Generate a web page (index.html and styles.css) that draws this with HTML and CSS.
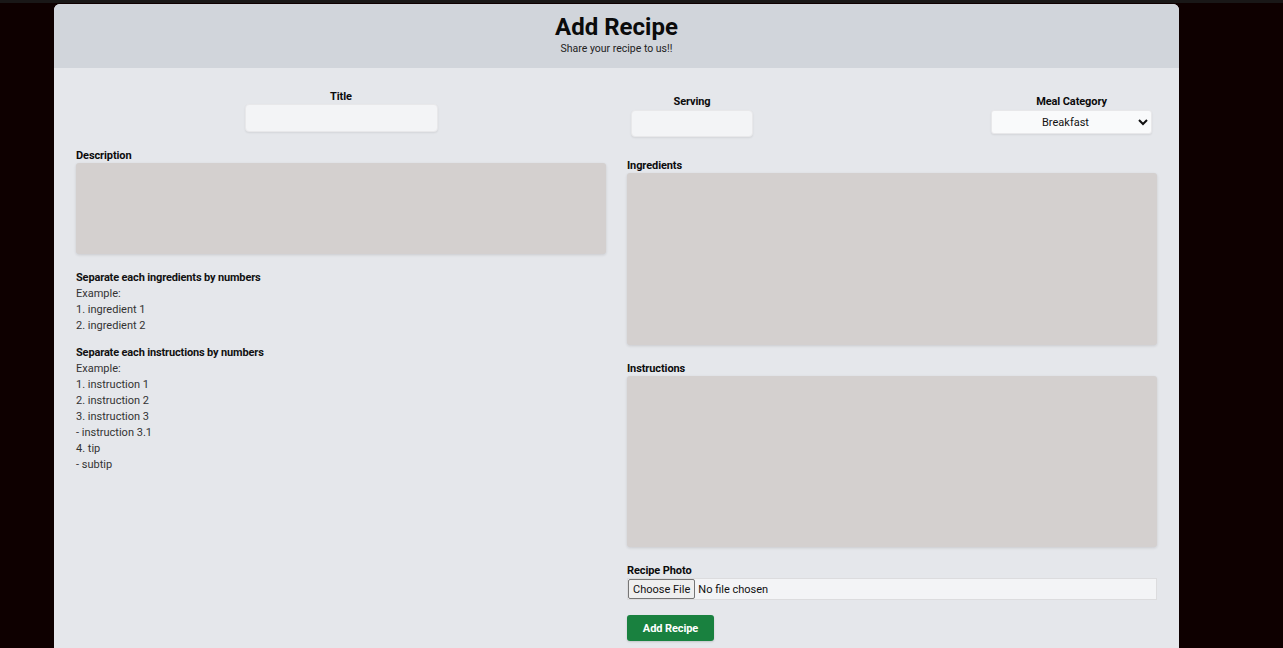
FILE: index.html
```html
<!DOCTYPE html>
<html lang="en">
<head>
<meta charset="utf-8">
<title>Add Recipe</title>
<link rel="stylesheet" href="styles.css">
</head>
<body>
<div class="card">
  <header class="card-header">
    <h1 class="page-title">Add Recipe</h1>
    <p class="page-subtitle">Share your recipe to us!!</p>
  </header>
  <form class="recipe-form">
    <div class="col col-left">
      <div class="field field-center field-title">
        <label class="label">Title</label>
        <input class="text-input title-input" type="text">
      </div>
      <div class="field field-desc">
        <label class="label">Description</label>
        <textarea class="area area-desc"></textarea>
      </div>
      <div class="hints">
        <div class="hint-block">
          <p class="hint-title">Separate each ingredients by numbers</p>
          <p class="hint-line">Example:</p>
          <p class="hint-line">1. ingredient 1</p>
          <p class="hint-line">2. ingredient 2</p>
        </div>
        <div class="hint-block">
          <p class="hint-title">Separate each instructions by numbers</p>
          <p class="hint-line">Example:</p>
          <p class="hint-line">1. instruction 1</p>
          <p class="hint-line">2. instruction 2</p>
          <p class="hint-line">3. instruction 3</p>
          <p class="hint-line">- instruction 3.1</p>
          <p class="hint-line">4. tip</p>
          <p class="hint-line">- subtip</p>
        </div>
      </div>
    </div>
    <div class="col col-right">
      <div class="top-row">
        <div class="field field-center">
          <label class="label">Serving</label>
          <input class="text-input serving-input" type="text">
        </div>
        <div class="field field-center">
          <label class="label">Meal Category</label>
          <select class="select">
            <option>Breakfast</option>
            <option>Lunch</option>
            <option>Dinner</option>
          </select>
        </div>
      </div>
      <div class="field field-ingr">
        <label class="label">Ingredients</label>
        <textarea class="area area-big"></textarea>
      </div>
      <div class="field field-gap">
        <label class="label">Instructions</label>
        <textarea class="area area-big2"></textarea>
      </div>
      <div class="field field-gap">
        <label class="label">Recipe Photo</label>
        <input class="file-input" type="file">
      </div>
      <div class="actions">
        <button type="button" class="btn-submit">Add Recipe</button>
      </div>
    </div>
  </form>
</div>
</body>
</html>
```

FILE: styles.css
```css
* { box-sizing: border-box; }
html, body { margin: 0; padding: 0; }
body {
  background: #0e0000;
  border-top: 3px solid #191717;
  font-family: Roboto, "Liberation Sans", Arial, sans-serif;
  color: #111;
  height: 648px;
  overflow: hidden;
}
.card {
  margin: 1px 0 0 54px;
  width: 1125px;
  background: #e5e7eb;
  border-radius: 6px 6px 0 0;
  overflow: hidden;
  min-height: 700px;
}
.card-header {
  background: #d1d5db;
  height: 64px;
  padding-top: 10px;
  text-align: center;
}
.page-title {
  margin: 0;
  font-size: 24px;
  line-height: 27px;
  font-weight: 700;
  color: #0b0b0b;
}
.page-subtitle {
  margin: 0;
  font-size: 10.5px;
  line-height: 16px;
  color: #222;
}
.recipe-form {
  display: flex;
  gap: 21px;
  padding: 0 22px 40px;
}
.col {
  width: 530px;
  display: flex;
  flex-direction: column;
}
.col-left { padding-top: 20px; }
.col-right { padding-top: 25px; }
.field { display: flex; flex-direction: column; }
.field-center { align-items: center; }
.label {
  display: block;
  padding-top: 2px;
  font-size: 11px;
  line-height: 14px;
  font-weight: 700;
  color: #0b0b0b;
  letter-spacing: -0.1px;
}
.text-input {
  margin-top: 1px;
  border: 1px solid #e8e8ea;
  background: #f3f4f6;
  border-radius: 4px;
  box-shadow: 0 1px 2px rgba(0,0,0,0.08);
  font-family: inherit;
  font-size: 12px;
  outline: none;
}
.field-title .text-input { margin-top: 0; }
.title-input { width: 193px; height: 28px; }
.serving-input { width: 122px; height: 27px; }
.field-desc { margin-top: 15px; }
.area {
  display: block;
  width: 100%;
  border: none;
  background: #d4d0cf;
  border-radius: 3px;
  box-shadow: 0 1px 3px rgba(0,0,0,0.12);
  resize: none;
  font-family: inherit;
  outline: none;
}
.area-desc { height: 91px; }
.area-big { height: 172px; }
.area-big2 { height: 171px; }
.hints { margin-top: 16px; }
.hint-block + .hint-block { margin-top: 11px; }
.hint-title {
  margin: 0;
  font-size: 11px;
  line-height: 16px;
  font-weight: 700;
  color: #111;
  letter-spacing: -0.15px;
}
.hint-line {
  margin: 0;
  font-size: 11px;
  line-height: 16px;
  color: #333;
}
.top-row {
  display: flex;
  justify-content: space-between;
  align-items: flex-start;
  padding: 0 5px 0 4px;
}
.select {
  margin-top: 1px;
  width: 161px;
  height: 24px;
  border: 1px solid #e8e8ea;
  background: #f9fafb;
  border-radius: 3px;
  box-shadow: 0 1px 2px rgba(0,0,0,0.08);
  font-family: inherit;
  font-size: 11px;
  text-align: center;
  text-align-last: center;
  color: #111;
  outline: none;
}
.field-ingr { margin-top: 20px; }
.field-gap { margin-top: 15px; }
.file-input {
  width: 100%;
  height: 22px;
  background: #f3f4f6;
  border: 1px solid #dcdcde;
  font-family: inherit;
  font-size: 11px;
  color: #111;
}
.file-input::file-selector-button {
  font-family: inherit;
  font-size: 11px;
  height: 20px;
  margin: 0 3px 0 0;
  padding: 0 4px;
  border: 1px solid #767676;
  border-radius: 2px;
  background: #efefef;
  color: #111;
}
.actions { margin-top: 15px; }
.btn-submit {
  width: 87px;
  height: 26px;
  border: none;
  border-radius: 3px;
  background: #19813f;
  color: #fff;
  font-family: inherit;
  font-size: 11px;
  font-weight: 700;
  letter-spacing: -0.1px;
  box-shadow: 0 1px 2px rgba(0,0,0,0.15);
}
```
